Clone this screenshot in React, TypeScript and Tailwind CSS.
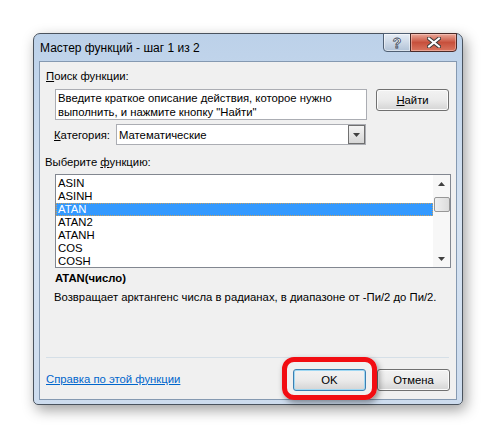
import React from 'react';

const items = ['ASIN', 'ASINH', 'ATAN', 'ATAN2', 'ATANH', 'COS', 'COSH'];

function Triangle({ up = false }: { up?: boolean }) {
    return (
        <svg width="7" height="4" viewBox="0 0 7 4">
            <path d={up ? 'M0 4 L3.5 0 L7 4 Z' : 'M0 0 L7 0 L3.5 4 Z'} fill="#404040" />
        </svg>
    );
}

function Button({ children, focused = false, className = '' }: { children: React.ReactNode; focused?: boolean; className?: string }) {
    return (
        <div
            className={
                'flex h-[22px] w-[73px] items-center justify-center rounded-[3px] border bg-gradient-to-b from-[#f2f2f2] via-[#ebebeb] to-[#d4d4d4] ' +
                (focused ? 'border-[#3c7fb1] shadow-[inset_0_0_0_1px_#9fd8f3]' : 'border-[#707070] shadow-[inset_0_0_0_1px_#fbfbfb]') +
                ' ' +
                className
            }
        >
            {children}
        </div>
    );
}

export default function App() {
    return (
        <div className="min-h-[439px] w-[497px] bg-white pt-[33px] pl-[33px] font-['Liberation_Sans',Arial,sans-serif] text-[11.3px] leading-[14px] text-black">
            {/* Window */}
            <div className="flex h-[372px] w-[430px] flex-col rounded-t-[7px] rounded-b-[5px] border border-[#4a535e] bg-gradient-to-b from-[#bcd1e9] via-[#d6e3f2] to-[#cddcee] shadow-[3px_5px_14px_rgba(0,0,0,0.38)]">
                {/* Title bar */}
                <div className="flex h-[27px] items-start justify-between pr-[5px] pl-[6px]">
                    <span className="mt-[7px] text-[12px]">Мастер функций - шаг 1 из 2</span>
                    <div className="-mt-px flex">
                        <div className="flex h-[19px] w-[28px] items-center justify-center rounded-bl-[4px] border border-[#4f5f73] bg-gradient-to-b from-[#e6edf6] via-[#cdd9e7] to-[#b2c3d7] shadow-[inset_0_0_0_1px_rgba(255,255,255,0.5)]">
                            <span className="text-[14px] leading-[14px] font-bold text-white [-webkit-text-stroke:0.8px_#3d4a5a]">?</span>
                        </div>
                        <div className="-ml-px flex h-[19px] w-[47px] items-center justify-center rounded-br-[4px] border border-[#4a2a28] bg-gradient-to-b from-[#eaa89a] via-[#c7503c] to-[#d9755f] shadow-[inset_0_0_0_1px_rgba(255,220,210,0.45)]">
                            <svg width="14" height="11" viewBox="0 0 14 11">
                                <path d="M2 1.5 L12 9.5 M12 1.5 L2 9.5" stroke="#3b3b3b" strokeWidth="4" strokeLinecap="square" />
                                <path d="M2 1.5 L12 9.5 M12 1.5 L2 9.5" stroke="#ffffff" strokeWidth="2" strokeLinecap="square" />
                            </svg>
                        </div>
                    </div>
                </div>

                {/* Client area */}
                <div className="mx-[5px] mb-[4px] flex-1 border border-[#8599b1] bg-[#f0f0f0] px-[6px] pt-[7px]">
                    <div>
                        <span className="underline">П</span>оиск функции:
                    </div>

                    <div className="mt-[6px] ml-[9px] flex items-start">
                        <div className="h-[31px] w-[312px] border border-[#abadb3] bg-white pt-px pl-[2px]">
                            Введите краткое описание действия, которое нужно
                            <br />
                            выполнить, и нажмите кнопку "Найти"
                        </div>
                        <Button className="ml-[9px] h-[21px]">
                            <span>
                                <span className="underline">Н</span>айти
                            </span>
                        </Button>
                    </div>

                    <div className="mt-[4px] flex items-center">
                        <div className="ml-[8px] w-[62px]">
                            <span className="underline">К</span>атегория:
                        </div>
                        <div className="flex h-[21px] w-[250px] items-center border border-[#abadb3] bg-white">
                            <span className="flex-1 pl-[2px]">Математические</span>
                            <div className="flex h-[19px] w-[17px] items-center justify-center border border-[#707070] bg-gradient-to-b from-[#f4f4f4] to-[#d6d6d6]">
                                <Triangle />
                            </div>
                        </div>
                    </div>

                    <div className="mt-[10px] -ml-px">
                        Выберите <span className="underline">ф</span>ункцию:
                    </div>

                    {/* List box */}
                    <div className="mt-[5px] ml-[9px] flex h-[94px] w-[396px] border border-[#828790] bg-white">
                        <div className="flex-1 pt-[2px]">
                            {items.map((item) => (
                                <div
                                    key={item}
                                    className={
                                        item === 'ATAN'
                                            ? 'h-[13px] border border-dotted border-[#c9a060] bg-[#3399ff] pl-px leading-[11px] text-white'
                                            : 'h-[13px] pl-[2px] leading-[13px]'
                                    }
                                >
                                    {item}
                                </div>
                            ))}
                        </div>
                        <div className="flex w-[17px] flex-col items-center bg-[#f7f7f7]">
                            <div className="flex h-[17px] items-center justify-center">
                                <Triangle up />
                            </div>
                            <div className="mt-[5px] h-[15px] w-[16px] rounded-[2px] border border-[#979797] bg-gradient-to-r from-[#f0f0f0] to-[#dcdcdc]" />
                            <div className="flex-1" />
                            <div className="flex h-[17px] items-center justify-center">
                                <Triangle />
                            </div>
                        </div>
                    </div>

                    <div className="mt-[3px] ml-[9px] font-bold">ATAN(число)</div>
                    <div className="mt-[5px] ml-[8px]">Возвращает арктангенс числа в радианах, в диапазоне от -Пи/2 до Пи/2.</div>

                    <div className="mt-[53px] mr-px h-px bg-[#d5dfe7]" />

                    <div className="mt-[11px] flex items-center">
                        <span className="-mt-[3px] text-[#0066cc] underline">Справка по этой функции</span>
                        <div className="flex-1" />
                        <div className="relative">
                            <Button focused>OK</Button>
                            <div className="absolute -top-[12px] -right-[11px] -bottom-[9px] -left-[11px] rounded-[12px] border-[5px] border-[#f20d12] shadow-[2px_3px_6px_rgba(0,0,0,0.4)]" />
                        </div>
                        <Button className="ml-[11px]">Отмена</Button>
                    </div>
                </div>
            </div>
        </div>
    );
}
